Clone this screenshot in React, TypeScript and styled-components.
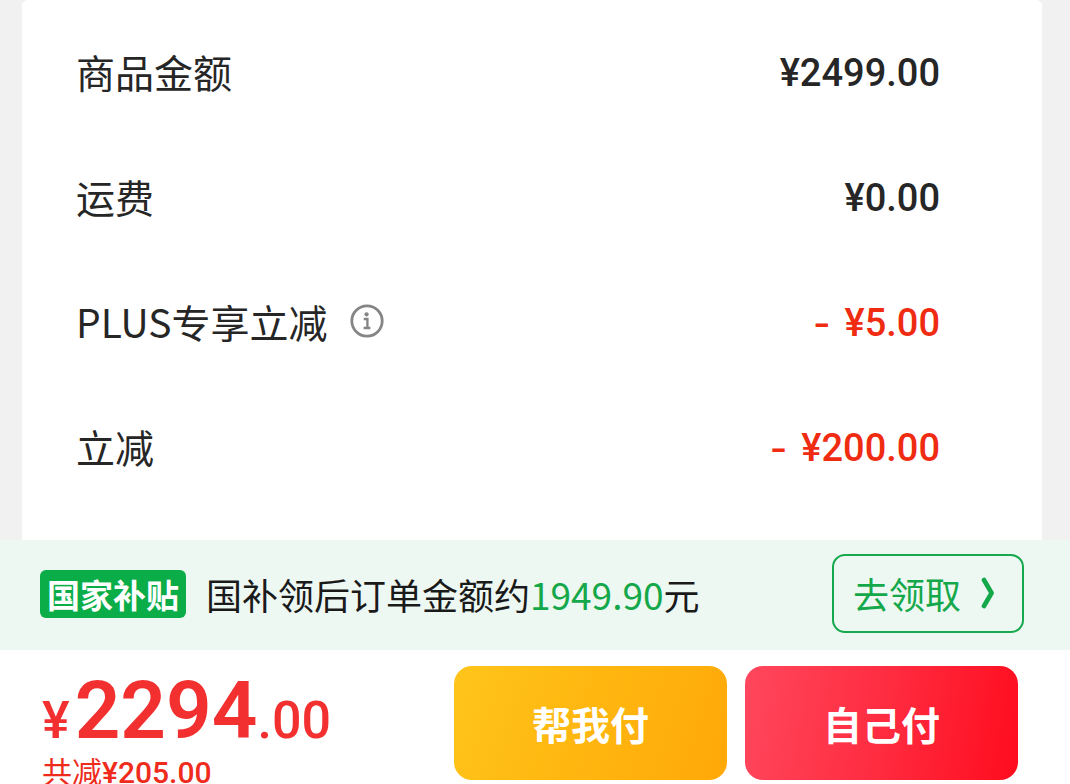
import React from 'react';
import styled, { createGlobalStyle } from 'styled-components';

const CJK = `"Noto Sans CJK SC", sans-serif`;
const NUM = `Roboto, "Noto Sans CJK SC", sans-serif`;

const GlobalStyle = createGlobalStyle`
  *, *::before, *::after { box-sizing: border-box; }
  body { margin: 0; background: #f1f1f1; font-family: ${CJK}; }
  button { border: 0; padding: 0; background: none; font-family: inherit; cursor: pointer; }
`;

const Page = styled.div`
  display: flex;
  flex-direction: column;
  height: 100vh;
  overflow: hidden;
`;

const Card = styled.main`
  flex: 1 0 auto;
  margin: 0 28px 0 22px;
  padding: 10px 102px 30px 54px;
  background: #fff;
  border-radius: 6px 6px 0 0;
`;

const Rows = styled.dl`
  margin: 0;
`;

const Row = styled.div`
  display: flex;
  align-items: center;
  justify-content: space-between;
  height: 125px;
`;

const Label = styled.dt`
  display: flex;
  align-items: center;
  gap: 22px;
  padding-bottom: 4px;
  font-size: 39px;
  line-height: 56px;
  color: #262626;
`;

const Amount = styled.dd<{ $discount?: boolean }>`
  display: flex;
  gap: 14px;
  margin: 0;
  font-family: ${NUM};
  font-size: 38px;
  font-weight: 500;
  line-height: 46px;
  color: ${(p) => (p.$discount ? '#ef2b12' : '#262626')};
`;

const Sign = styled.span`
  font-family: Inter, sans-serif;
`;

const InfoButton = styled.button`
  display: flex;
`;

const SubsidyBar = styled.section`
  display: flex;
  flex-shrink: 0;
  align-items: center;
  height: 110px;
  padding: 0 46px 3px 40px;
  background: #eef8f3;
`;

const Badge = styled.strong`
  padding: 0 7px;
  border-radius: 6px;
  background: #0bad48;
  color: #fff;
  font-size: 33px;
  font-weight: 700;
  line-height: 48px;
`;

const SubsidyText = styled.p`
  flex: 1;
  margin: 0 0 0 20px;
  font-size: 36px;
  line-height: 52px;
  color: #1a1a1a;
`;

const Highlight = styled.span`
  font-size: 37px;
  color: #15a84a;
`;

const ClaimButton = styled.button`
  display: flex;
  align-items: center;
  justify-content: center;
  gap: 20px;
  width: 192px;
  height: 79px;
  padding: 0 8px 2px 0;
  border: 2px solid #16a84c;
  border-radius: 13px;
  color: #15a84a;
  font-size: 36px;
  line-height: 52px;
`;

const PayBar = styled.footer`
  display: flex;
  flex-shrink: 0;
  align-items: flex-start;
  justify-content: space-between;
  padding: 16px 52px 0 42px;
  background: #fff;
`;

const Total = styled.div`
  font-family: ${NUM};
  color: #f23030;
`;

const Price = styled.p`
  margin: 0;
  font-size: 52px;
  font-weight: 500;
  line-height: 90px;
  white-space: nowrap;
`;

const Yuan = styled.span`
  margin-left: 5px;
  font-size: 80px;
  font-weight: 600;
`;

const Saved = styled.p`
  margin: -10px 0 0;
  font-size: 30px;
  line-height: 34px;
  color: #ef2b1c;
`;

const SavedAmount = styled.span`
  font-weight: 500;
`;

const Actions = styled.div`
  display: flex;
  gap: 18px;
`;

const PayButton = styled.button<{ $primary?: boolean }>`
  width: 273px;
  height: 114px;
  border-radius: 18px;
  background: ${(p) =>
    p.$primary
      ? 'linear-gradient(100deg, #ff475d, #ff2c40 50%, #ff0c1e)'
      : 'linear-gradient(110deg, #ffc51a, #ffb60f 50%, #ffa808)'};
  color: #fff;
  font-size: 39px;
  font-weight: 700;
  line-height: 56px;
`;

const InfoIcon = () => (
  <svg width="34" height="34" viewBox="0 0 34 34" fill="none" aria-hidden="true">
    <circle cx="17" cy="17" r="15.2" stroke="#858585" strokeWidth="2.8" />
    <circle cx="16.6" cy="10.3" r="2.1" fill="#858585" />
    <path d="M13.8 15H17.4V24M13.6 24H20.4" stroke="#858585" strokeWidth="2.4" />
  </svg>
);

const ChevronIcon = () => (
  <svg width="14" height="32" viewBox="0 0 14 32" fill="none" aria-hidden="true">
    <path d="M3 3L10.6 16L3 29" stroke="#15a84a" strokeWidth="4.6" strokeLinecap="round" strokeLinejoin="round" />
  </svg>
);

const items = [
  { label: '商品金额', amount: '¥2499.00' },
  { label: '运费', amount: '¥0.00' },
  { label: 'PLUS专享立减', amount: '¥5.00', discount: true, info: true },
  { label: '立减', amount: '¥200.00', discount: true },
];

export default function App() {
  return (
    <>
      <GlobalStyle />
      <Page>
        <Card>
          <Rows>
            {items.map((item) => (
              <Row key={item.label}>
                <Label>
                  {item.label}
                  {item.info && (
                    <InfoButton type="button" aria-label="优惠说明">
                      <InfoIcon />
                    </InfoButton>
                  )}
                </Label>
                <Amount $discount={item.discount}>
                  {item.discount && <Sign>-</Sign>}
                  <span>{item.amount}</span>
                </Amount>
              </Row>
            ))}
          </Rows>
        </Card>
        <SubsidyBar>
          <Badge>国家补贴</Badge>
          <SubsidyText>
            国补领后订单金额约<Highlight>1949.90</Highlight>元
          </SubsidyText>
          <ClaimButton type="button">
            去领取
            <ChevronIcon />
          </ClaimButton>
        </SubsidyBar>
        <PayBar>
          <Total>
            <Price>
              ¥<Yuan>2294</Yuan>.00
            </Price>
            <Saved>
              共减<SavedAmount>¥205.00</SavedAmount>
            </Saved>
          </Total>
          <Actions>
            <PayButton type="button">帮我付</PayButton>
            <PayButton type="button" $primary>
              自己付
            </PayButton>
          </Actions>
        </PayBar>
      </Page>
    </>
  );
}
